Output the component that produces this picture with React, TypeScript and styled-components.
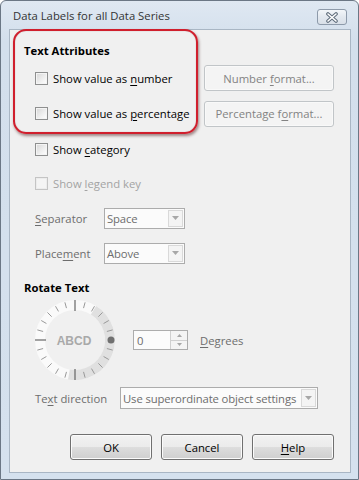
import React from "react";
import styled, { createGlobalStyle } from "styled-components";

const Global = createGlobalStyle`
  html, body { margin: 0; padding: 0; background: #ffffff; }
  body { font-family: "Open Sans", "Noto Sans", sans-serif; font-size: 11.3px; color: #000; }
  * { box-sizing: border-box; }
`;

const Window = styled.div`
  position: relative;
  width: 359px;
  height: 480px;
  border: 1px solid #6b7785;
  border-radius: 6px 6px 0 0;
  background: linear-gradient(#dfe8f2, #d3dfec 40px, #d5e1ee);
  display: flex;
  flex-direction: column;
  padding: 0 7px 6px 8px;
`;

const TitleBar = styled.div`
  height: 28px;
  display: flex;
  align-items: center;
  padding: 0 4px 2px 4px;
`;

const Title = styled.div`
  flex: 1;
  color: #333333;
  font-size: 11.3px;
  padding-top: 2px;
`;

const CloseBtn = styled.div`
  width: 30px;
  height: 16px;
  margin-top: 6px;
  border: 1px solid #8d9aaa;
  border-radius: 3px;
  background: linear-gradient(#f3f6f9, #e2e8ef 50%, #d9e0e8);
  display: flex;
  align-items: center;
  justify-content: center;
`;

const Content = styled.div`
  flex: 1;
  background: #f0f0f0;
  border: 1px solid #a9b6c4;
  display: flex;
  flex-direction: column;
  padding: 10px 16px 0 14px;
`;

const Heading = styled.div<{ $mt?: number }>`
  height: 20px;
  margin-top: ${(p) => p.$mt ?? 0}px;
  display: flex;
  align-items: center;
  font-weight: 700;
  font-size: 11.3px;
  color: #000;
`;

const Row = styled.div<{ $h: number; $mt?: number }>`
  height: ${(p) => p.$h}px;
  margin-top: ${(p) => p.$mt ?? 0}px;
  display: flex;
  align-items: center;
  padding-left: 11px;
`;

const CheckLabel = styled.label<{ $disabled?: boolean }>`
  display: flex;
  align-items: center;
  gap: 5px;
  color: ${(p) => (p.$disabled ? "#a3a3a3" : "#000")};
`;

const Box = styled.span<{ $disabled?: boolean }>`
  width: 13px;
  height: 13px;
  border: 1px solid ${(p) => (p.$disabled ? "#c4c4c4" : "#8e8f8f")};
  background: ${(p) =>
    p.$disabled
      ? "#f4f4f4"
      : "linear-gradient(135deg, #d6d6d6, #f4f4f4 70%, #ffffff)"};
  box-shadow: inset 0 0 0 1px ${(p) => (p.$disabled ? "#ececec" : "#f4f4f4")};
  flex: none;
`;

const PushButton = styled.div<{ $w: number; $disabled?: boolean; $right?: boolean }>`
  width: ${(p) => p.$w}px;
  height: 26px;
  margin-left: ${(p) => (p.$right ? "auto" : "0")};
  border: 1px solid ${(p) => (p.$disabled ? "#c1c5c8" : "#707070")};
  border-radius: 3px;
  background: ${(p) =>
    p.$disabled
      ? "#f4f4f4"
      : "linear-gradient(#f2f2f2, #ebebeb 50%, #dddddd 51%, #cfcfcf)"};
  box-shadow: inset 0 0 0 1px ${(p) => (p.$disabled ? "#f9f9f9" : "#fbfbfb")};
  color: ${(p) => (p.$disabled ? "#838383" : "#000")};
  display: flex;
  align-items: center;
  justify-content: center;
  font-size: 11.3px;
`;

const FieldLabel = styled.div<{ $w: number }>`
  width: ${(p) => p.$w}px;
  color: #6d6d6d;
  flex: none;
`;

const Combo = styled.div<{ $w: number; $h: number }>`
  width: ${(p) => p.$w}px;
  height: ${(p) => p.$h}px;
  border: 1px solid #acacac;
  background: #fbfbfb;
  display: flex;
  align-items: stretch;
  color: #6d6d6d;
`;

const ComboText = styled.div`
  flex: 1;
  min-width: 0;
  display: flex;
  align-items: center;
  padding-left: 2px;
  white-space: nowrap;
  letter-spacing: -0.12px;
`;

const ComboArrow = styled.div`
  width: 15px;
  flex: none;
  margin: 1px;
  border: 1px solid #d9d9d9;
  background: #f4f4f4;
  display: flex;
  align-items: center;
  justify-content: center;
`;

const DialWrap = styled.div`
  width: 80px;
  height: 80px;
  flex: none;
  margin-right: 18px;
`;

const Spin = styled.div`
  width: 55px;
  height: 20px;
  border: 1px solid #acacac;
  background: #fbfbfb;
  display: flex;
  color: #6d6d6d;
`;

const SpinText = styled.div`
  flex: 1;
  display: flex;
  align-items: center;
  padding-left: 3px;
`;

const SpinButtons = styled.div`
  width: 17px;
  display: flex;
  flex-direction: column;
  border-left: 1px solid #d0d0d0;
`;

const SpinBtn = styled.div`
  flex: 1;
  display: flex;
  align-items: center;
  justify-content: center;
  background: #f4f4f4;
  & + & { border-top: 1px solid #d0d0d0; }
`;

const DegreesLabel = styled.div`
  margin-left: 12px;
  color: #6d6d6d;
`;

const ButtonRow = styled.div`
  display: flex;
  justify-content: flex-end;
  gap: 9px;
  margin-top: 23px;
`;

const Highlight = styled.div`
  position: absolute;
  left: 12px;
  top: 28px;
  width: 185px;
  height: 105px;
  border: 2.5px solid #d01f2d;
  border-radius: 13px;
  box-shadow: 1px 2px 3px rgba(60, 0, 0, 0.45), inset 0 0 1px rgba(80, 0, 0, 0.4);
  pointer-events: none;
`;

const U = styled.span`
  text-decoration: underline;
  text-underline-offset: 2px;
`;

const DownArrow = () => (
  <svg width="7" height="4" viewBox="0 0 7 4">
    <path d="M0 0 L7 0 L3.5 4 Z" fill="#a7a7a7" />
  </svg>
);

const SmallArrow = ({ up }: { up?: boolean }) => (
  <svg width="5" height="3" viewBox="0 0 5 3">
    <path d={up ? "M0 3 L5 3 L2.5 0 Z" : "M0 0 L5 0 L2.5 3 Z"} fill="#a7a7a7" />
  </svg>
);

const CloseGlyph = () => (
  <svg width="14" height="11" viewBox="0 0 14 11">
    <path d="M3 2 L11 9 M11 2 L3 9" stroke="#5d6b7a" strokeWidth="3.6" strokeLinecap="round" />
    <path d="M3 2 L11 9 M11 2 L3 9" stroke="#ffffff" strokeWidth="1.6" strokeLinecap="round" />
  </svg>
);

const Dial = () => {
  const c = 40;
  const pt = (r: number, a: number) => {
    const rad = (a * Math.PI) / 180;
    return [c + r * Math.cos(rad), c - r * Math.sin(rad)];
  };
  const a1 = 58;
  const a2 = -100;
  const [o1x, o1y] = pt(40, a1);
  const [o2x, o2y] = pt(40, a2);
  const [i1x, i1y] = pt(30, a1);
  const [i2x, i2y] = pt(30, a2);
  const band = `M${o1x} ${o1y} A40 40 0 0 1 ${o2x} ${o2y} L${i2x} ${i2y} A30 30 0 0 0 ${i1x} ${i1y} Z`;
  const ticks = Array.from({ length: 24 }, (_, i) => i * 15).filter((a) => a !== 0);
  return (
    <svg width="80" height="80" viewBox="0 0 80 80" style={{ overflow: "visible" }}>
      <circle cx={c} cy={c} r={35} fill="none" stroke="#fafafa" strokeWidth={10} />
      <path d={band} fill="#e0e0e0" />
      {ticks.map((a) => {
        const major = a % 90 === 0;
        const [x1, y1] = pt(major ? 29 : 33, a);
        const [x2, y2] = pt(major ? 40 : 39, a);
        return (
          <line
            key={a}
            x1={x1}
            y1={y1}
            x2={x2}
            y2={y2}
            stroke={major ? "#4a4a4a" : "#999999"}
            strokeWidth={1}
          />
        );
      })}
      <circle cx={76} cy={c} r={3.5} fill="#707070" />
      <text
        x={c - 1}
        y={c + 1}
        textAnchor="middle"
        dominantBaseline="central"
        fontFamily='"Liberation Sans", Arial, sans-serif'
        fontWeight={700}
        fontSize={12}
        fill="#a9a9a9"
      >
        ABCD
      </text>
    </svg>
  );
};

export default function App() {
  return (
    <>
      <Global />
      <Window>
        <TitleBar>
          <Title>Data Labels for all Data Series</Title>
          <CloseBtn>
            <CloseGlyph />
          </CloseBtn>
        </TitleBar>
        <Content>
          <Heading>Text Attributes</Heading>
          <Row $h={36}>
            <CheckLabel>
              <Box />
              <span>
                Show value as <U>n</U>umber
              </span>
            </CheckLabel>
            <PushButton $w={130} $disabled $right>
              Number&nbsp;<U>f</U>ormat...
            </PushButton>
          </Row>
          <Row $h={35}>
            <CheckLabel>
              <Box />
              <span>
                Show value as <U>p</U>ercentage
              </span>
            </CheckLabel>
            <PushButton $w={130} $disabled $right>
              Percentage f<U>o</U>rmat...
            </PushButton>
          </Row>
          <Row $h={36}>
            <CheckLabel>
              <Box />
              <span>
                Show <U>c</U>ategory
              </span>
            </CheckLabel>
          </Row>
          <Row $h={32}>
            <CheckLabel $disabled>
              <Box $disabled />
              <span>
                Show <U>l</U>egend key
              </span>
            </CheckLabel>
          </Row>
          <Row $h={38}>
            <FieldLabel $w={69}>
              <U>S</U>eparator
            </FieldLabel>
            <Combo $w={81} $h={21}>
              <ComboText>Space</ComboText>
              <ComboArrow>
                <DownArrow />
              </ComboArrow>
            </Combo>
          </Row>
          <Row $h={32}>
            <FieldLabel $w={69}>
              Place<U>m</U>ent
            </FieldLabel>
            <Combo $w={81} $h={21}>
              <ComboText>Above</ComboText>
              <ComboArrow>
                <DownArrow />
              </ComboArrow>
            </Combo>
          </Row>
          <Heading $mt={8}>Rotate Text</Heading>
          <Row $h={80} $mt={3}>
            <DialWrap>
              <Dial />
            </DialWrap>
            <Spin>
              <SpinText>0</SpinText>
              <SpinButtons>
                <SpinBtn>
                  <SmallArrow up />
                </SpinBtn>
                <SpinBtn>
                  <SmallArrow />
                </SpinBtn>
              </SpinButtons>
            </Spin>
            <DegreesLabel>
              <U>D</U>egrees
            </DegreesLabel>
          </Row>
          <Row $h={26} $mt={5}>
            <FieldLabel $w={85}>
              Te<U>x</U>t direction
            </FieldLabel>
            <Combo $w={198} $h={22}>
              <ComboText>Use superordinate object settings</ComboText>
              <ComboArrow>
                <DownArrow />
              </ComboArrow>
            </Combo>
          </Row>
          <ButtonRow>
            <PushButton $w={82}>OK</PushButton>
            <PushButton $w={82}>Cancel</PushButton>
            <PushButton $w={82}>
              <U>H</U>elp
            </PushButton>
          </ButtonRow>
        </Content>
        <Highlight />
      </Window>
    </>
  );
}
